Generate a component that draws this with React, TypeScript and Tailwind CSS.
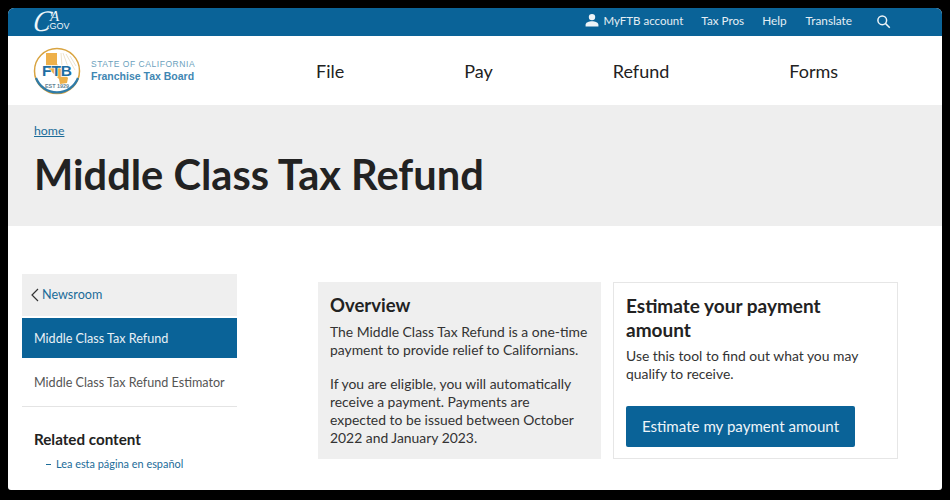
const font = "[font-family:'Lato','Noto_Sans',sans-serif]";

function FtbLogo() {
  return (
    <svg width="48" height="48" viewBox="0 0 48 48" className="shrink-0">
      <circle cx="24" cy="24" r="22.5" fill="#fff" stroke="#d9a441" strokeWidth="1.5" />
      <path d="M3 31a22.5 22.5 0 0 0 42 0" fill="none" stroke="#2f7ba8" strokeWidth="2.2" />
      <path d="M28 6l2 26M30 6l8 22M33 7l9 16M37 9l6 10" stroke="#e8dcc0" strokeWidth="0.8" />
      <path d="M13 6h11v11l11 14-1 5-7 1-1-5-13-13z" fill="#eeb04a" />
      <text x="24" y="29" textAnchor="middle" fontSize="15.5" fontWeight="700" fill="#1f6ea3" stroke="#fff" strokeWidth="1.4" paintOrder="stroke" fontFamily="Liberation Sans">FTB</text>
      <text x="24" y="41" textAnchor="middle" fontSize="5.4" fontWeight="700" fill="#5f7f92" fontFamily="Liberation Sans">EST 1929</text>
    </svg>
  );
}

function CaGov() {
  return (
    <svg width="36" height="24" viewBox="0 0 36 24" className="-mt-[3px] shrink-0 overflow-visible" fill="#eef6fa">
      <text transform="translate(-1 22) scale(1 1.15) skewX(-12)" fontSize="26" fontStyle="italic" fontFamily="Liberation Serif">C</text>
      <text x="17" y="12" fontSize="15" fontStyle="italic" fontFamily="Liberation Serif">A</text>
      <text x="14" y="20" fontSize="9" fontFamily="Liberation Sans">.GOV</text>
    </svg>
  );
}

function Top({ children, className }: { children: React.ReactNode; className: string }) {
  return <span className={`-mt-[2px] leading-none text-[#e4eef4] ${className}`}>{children}</span>;
}

export default function App() {
  return (
    <div className={`h-[500px] w-[950px] overflow-hidden bg-black p-2 pb-[10px] ${font}`}>
      <div className="flex h-full flex-col overflow-hidden rounded-t-[6px] rounded-b-[3px] bg-white">
        <header className="flex h-[28px] shrink-0 items-center bg-[#0a6398] pl-[25px] pr-[51px] text-white">
          <CaGov />
          <nav className="ml-auto flex items-center">
            <svg width="14" height="14" viewBox="0 0 24 24" fill="#eef4f8" className="mr-[4px] -mt-[5px]">
              <circle cx="12" cy="7" r="5.5" />
              <path d="M1 23v-3c0-4 6-6 11-6s11 2 11 6v3z" />
            </svg>
            <Top className="text-[11.5px]">MyFTB account</Top>
            <Top className="ml-[18px] text-[11.7px]">Tax Pros</Top>
            <Top className="ml-[18px] text-[11.8px]">Help</Top>
            <Top className="ml-[19px] text-[11.8px]">Translate</Top>
            <svg width="15" height="15" viewBox="0 0 24 24" fill="none" stroke="#eef4f8" strokeWidth="2.4" className="ml-[24px] -mt-[2px]">
              <circle cx="10" cy="10" r="7" />
              <path d="M15 15l7 7" />
            </svg>
          </nav>
        </header>

        <div className="flex h-[69px] shrink-0 items-center pl-[25px]">
          <FtbLogo />
          <div className="ml-[10px] flex w-[120px] flex-col [font-family:'Liberation_Sans',sans-serif]">
            <span className="text-[8.5px] leading-[11px] tracking-[0.55px] text-[#6b9fbd]">STATE OF CALIFORNIA</span>
            <span className="text-[10.5px] leading-[12px] font-bold text-[#3f87b3]">Franchise Tax Board</span>
          </div>
          <nav className="flex text-[18px] leading-none text-[#222]">
            <span className="ml-[105px]">File</span>
            <span className="ml-[120px]">Pay</span>
            <span className="ml-[120px]">Refund</span>
            <span className="ml-[120px]">Forms</span>
          </nav>
        </div>

        <section className="h-[121px] shrink-0 bg-[#eeeeee] pt-[18px] pl-[26px]">
          <a className="block text-[12.3px] leading-[16px] text-[#1b6c99] underline">home</a>
          <h1 className="mt-[10px] text-[41.6px] leading-[50px] font-bold text-[#222]">Middle Class Tax Refund</h1>
        </section>

        <main className="flex min-h-0 flex-1 pt-[48px] pl-[14px]">
          <aside className="w-[215px] shrink-0">
            <div className="flex h-[42px] items-center gap-[3px] bg-[#efefef] pl-[8px] text-[12.6px] text-[#1b6c99]">
              <svg width="9" height="14" viewBox="0 0 9 14" fill="none" stroke="#333" strokeWidth="1.2"><path d="M8 1L2 7l6 6" /></svg>
              Newsroom
            </div>
            <div className="mt-[2px] flex h-[40px] items-center bg-[#0a6398] pt-[2px] pl-[12px] text-[12.6px] text-[#e8f1f6]">Middle Class Tax Refund</div>
            <div className="flex h-[49px] items-center border-b border-[#e4e4e4] pt-[2px] pl-[12px] text-[12.6px] text-[#555]">Middle Class Tax Refund Estimator</div>
            <h3 className="mt-[22px] pl-[12px] text-[15.2px] leading-[20px] font-bold text-[#222]">Related content</h3>
            <div className="mt-[8px] flex items-center gap-[5px] pl-[24px] text-[10.9px] leading-[14px] text-[#1b6c99]">
              <span className="h-px w-[5px] bg-[#1b6c99]"></span>
              Lea esta página en español
            </div>
          </aside>

          <div className="mt-[8px] ml-[81px] h-[177px] w-[283px] shrink-0 bg-[#efefef] pt-[11px] pl-[12px] pr-[12px] text-[#333]">
            <h2 className="text-[18.5px] leading-[25px] font-bold text-[#222]">Overview</h2>
            <p className="mt-[5px] text-[13.9px] leading-[18px]">The Middle Class Tax Refund is a one-time payment to provide relief to Californians.</p>
            <p className="mt-[16px] text-[13.9px] leading-[18px]">If you are eligible, you will automatically receive a payment. Payments are expected to be issued between October 2022 and January 2023.</p>
          </div>

          <div className="mt-[8px] ml-[12px] h-[177px] w-[285px] shrink-0 border border-[#e6e6e6] pt-[11px] pl-[12px] pr-[20px]">
            <h2 className="text-[19px] leading-[24px] font-bold text-[#222]">Estimate your payment amount</h2>
            <p className="mt-[5px] text-[13.9px] leading-[18px] text-[#333]">Use this tool to find out what you may qualify to receive.</p>
            <button className="mt-[23px] flex h-[41px] w-[229px] items-center justify-center rounded-[2px] bg-[#0a6398] text-[15.1px] text-[#eef4f8]">Estimate my payment amount</button>
          </div>
        </main>
      </div>
    </div>
  );
}
